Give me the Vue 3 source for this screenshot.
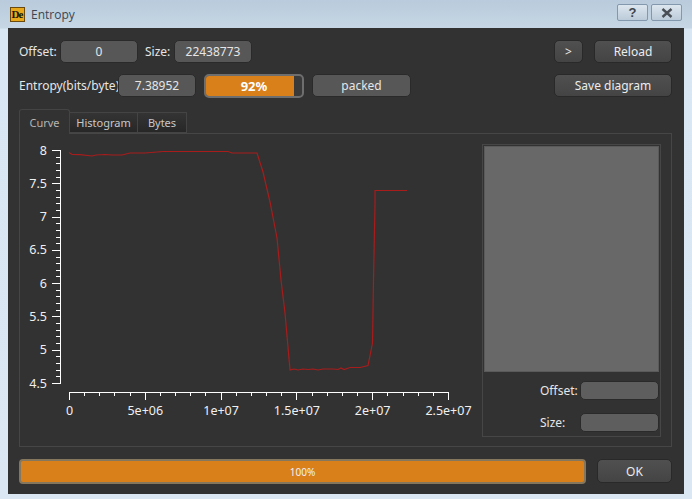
<template>
  <div class="window">
    <!-- title bar -->
    <div class="titlebar">
      <span class="app-icon"><b>D</b><i>e</i></span>
      <span class="title">Entropy</span>
      <div class="caption-btns">
        <button class="caption-btn help">?</button>
        <button class="caption-btn close">
          <svg width="12" height="10" viewBox="0 0 12 10">
            <path d="M1.5 1 L10.5 9 M10.5 1 L1.5 9" stroke="#4a4f55" stroke-width="2.4" fill="none" />
          </svg>
        </button>
      </div>
    </div>

    <div class="client">
      <div class="top">
        <div class="top-left">
          <div class="row">
            <label class="lbl-offset">Offset:</label>
            <div class="field w78">0</div>
            <label class="lbl-size">Size:</label>
            <div class="field w78">22438773</div>
          </div>
          <div class="row">
            <label class="lbl-entropy">Entropy(bits/byte):</label>
            <div class="field w78">7.38952</div>
            <div class="meter">
              <div class="meter-fill" :style="{ width: '92%' }"></div>
              <span class="meter-text">92%</span>
            </div>
            <div class="field w98">packed</div>
          </div>
        </div>
        <div class="top-right">
          <div class="row">
            <button class="btn w28">&gt;</button>
            <button class="btn w78">Reload</button>
          </div>
          <div class="row">
            <button class="btn w118">Save diagram</button>
          </div>
        </div>
      </div>

      <div class="tabs">
        <div
          v-for="(tab, i) in tabs"
          :key="tab.name"
          class="tab"
          :class="{ active: i === 0 }"
          :style="{ width: tab.width + 'px' }"
        >
          {{ tab.name }}
        </div>
      </div>

      <div class="pane">
        <!-- viewBox is in window coordinates, it's a plot canvas -->
        <svg class="plot" width="456" height="296" viewBox="20 140 456 296">
          <g stroke="#ffffff" stroke-width="1" shape-rendering="crispEdges">
            <line x1="60.5" y1="150" x2="60.5" y2="384" />
            <line
              v-for="t in yTicks"
              :key="'y' + t.y"
              :x1="t.major ? 52 : 56"
              x2="60"
              :y1="t.y"
              :y2="t.y"
            />
            <line x1="69" y1="392.5" x2="449" y2="392.5" />
            <line
              v-for="t in xTicks"
              :key="'x' + t.x"
              :x1="t.x"
              :x2="t.x"
              y1="393"
              :y2="t.major ? 400 : 396"
            />
          </g>
          <g class="axis-text">
            <text v-for="l in yLabels" :key="l.text" x="47" :y="l.y + 4.5" text-anchor="end">{{ l.text }}</text>
            <text v-for="l in xLabels" :key="l.text" :x="l.x" y="415" text-anchor="middle">{{ l.text }}</text>
          </g>
          <polyline :points="curve" fill="none" stroke="#a81c1c" stroke-width="1.2" />
        </svg>

        <div class="side">
          <div class="preview"></div>
          <div class="side-row">
            <label>Offset:</label>
            <div class="field side-field"></div>
          </div>
          <div class="side-row">
            <label class="lbl-side-size">Size:</label>
            <div class="field side-field"></div>
          </div>
        </div>
      </div>

      <div class="bottom">
        <div class="progress">100%</div>
        <button class="btn ok">OK</button>
      </div>
    </div>
  </div>
</template>

<script setup>
const tabs = [
  { name: 'Curve', width: 51 },
  { name: 'Histogram', width: 68 },
  { name: 'Bytes', width: 49 }
]

// y axis: 8 at y=150, 4.5 at y=383
const yPos = v => 150 + (8 - v) * (233 / 3.5)
const yTicks = []
for (let i = 0; i <= 35; i++) {
  yTicks.push({ y: Math.round(yPos(8 - i / 10)) + 0.5, major: i % 5 === 0 })
}
const yLabels = ['8', '7.5', '7', '6.5', '6', '5.5', '5', '4.5'].map(text => ({
  text,
  y: yPos(Number(text))
}))

// x axis: 0 at x=69.5, 2.5e7 at x=448.5
const xPos = v => 69.5 + (v / 2.5e7) * 379
const xTicks = []
for (let i = 0; i <= 25; i++) {
  xTicks.push({ x: Math.round(xPos(i * 1e6) - 0.5) + 0.5, major: i % 5 === 0 })
}
const xLabels = [
  { text: '0', v: 0 },
  { text: '5e+06', v: 5e6 },
  { text: '1e+07', v: 1e7 },
  { text: '1.5e+07', v: 1.5e7 },
  { text: '2e+07', v: 2e7 },
  { text: '2.5e+07', v: 2.5e7 }
].map(l => ({ text: l.text, x: xPos(l.v) }))

const curve = [
  [69, 152.5], [72, 154.5], [80, 154.7], [92, 156], [96, 155], [105, 154.5], [112, 155],
  [122, 155], [130, 153], [145, 153], [163, 151.5], [228, 151.5], [232, 153], [240, 153],
  [257, 153], [263, 172], [270, 202], [277, 238], [281, 280], [285, 313], [290, 370],
  [294, 369], [298, 370], [303, 369], [308, 369.5], [313, 369], [318, 370], [323, 369],
  [333, 369], [338, 369.5], [341, 368], [344, 369.5], [350, 367.5], [360, 367.5], [368, 365.5],
  [372.5, 343], [373.5, 280], [375, 205], [375, 190.5], [407, 190.5]
].map(p => p.join(',')).join(' ')
</script>

<style scoped>
.window {
  width: 692px;
  height: 499px;
  box-sizing: border-box;
  padding: 0 8px 5px;
  display: flex;
  flex-direction: column;
  background: linear-gradient(180deg, #b9cbdc 0, #c6d6e4 28px, #d9e6f3 29px, #dbe8f4 100%);
  font-family: "Noto Sans", "Open Sans", sans-serif;
  font-size: 12px;
  color: #e6e6e6;
  overflow: hidden;
}

.titlebar {
  height: 28px;
  flex: none;
  display: flex;
  align-items: center;
  margin: 0 -1px;
  padding-left: 3px;
}

.app-icon {
  width: 15px;
  height: 15px;
  box-sizing: border-box;
  border: 1px solid #6b4a10;
  background: #e8a81c;
  color: #1a1208;
  display: flex;
  align-items: center;
  justify-content: center;
  font-family: "Liberation Serif", serif;
  font-size: 11px;
  line-height: 1;
  overflow: hidden;
}

.app-icon b { font-weight: 700; }
.app-icon i { font-style: normal; font-weight: 700; margin-left: -1px; }

.title {
  margin-left: 6px;
  color: #3c4650;
  font-size: 12px;
  font-family: "Open Sans", "Noto Sans", sans-serif;
}

.caption-btns {
  margin-left: auto;
  margin-right: 3px;
  margin-top: -3px;
  display: flex;
  gap: 3px;
}

.caption-btn {
  height: 17px;
  width: 31px;
  box-sizing: border-box;
  padding: 0;
  border: 1px solid #8398ad;
  border-radius: 2px;
  background: linear-gradient(180deg, #dce6ef, #bccbd9);
  color: #3f454c;
  font-family: "Liberation Sans", sans-serif;
  font-weight: 700;
  font-size: 13px;
  line-height: 14px;
  display: flex;
  align-items: center;
  justify-content: center;
}

.client {
  flex: 1;
  background: #323232;
  display: flex;
  flex-direction: column;
  padding: 12px 12px 0 11px;
  min-height: 0;
}

.top {
  display: flex;
  justify-content: space-between;
}

.top-left,
.top-right {
  display: flex;
  flex-direction: column;
  gap: 11px;
}

.top-right {
  align-items: flex-end;
}

.row {
  height: 23px;
  display: flex;
  align-items: center;
}

.lbl-offset { width: 41px; }
.lbl-size { width: 29px; margin-left: 7px; }
.lbl-entropy { width: 99px; }

.field {
  height: 23px;
  box-sizing: border-box;
  border: 1px solid #2a2a2a;
  border-radius: 5px;
  background: #575757;
  color: #e6e6e6;
  display: flex;
  align-items: center;
  justify-content: center;
  flex: none;
}

.w78 { width: 78px; }
.w98 { width: 99px; margin-left: 8px; }
.w28 { width: 29px; margin-right: 11px; }
.w118 { width: 118px; }

.btn {
  height: 23px;
  box-sizing: border-box;
  padding: 0;
  border: 1px solid #292929;
  border-radius: 5px;
  background: linear-gradient(180deg, #505050, #444444);
  color: #ececec;
  font-family: inherit;
  font-size: 12px;
}

.meter {
  position: relative;
  width: 100px;
  height: 24px;
  margin-left: 8px;
  box-sizing: border-box;
  border: 2px solid #6e6e6e;
  border-radius: 5px;
  background: #3a3a3a;
  overflow: hidden;
}

.meter-fill {
  height: 100%;
  background: #d9801a;
}

.meter-text {
  position: absolute;
  inset: 0;
  display: flex;
  align-items: center;
  justify-content: center;
  color: #fff;
  font-weight: 700;
  font-size: 13px;
}

.tabs {
  display: flex;
  align-items: flex-end;
  margin-top: 12px;
  height: 24px;
  position: relative;
  z-index: 1;
}

.tab {
  height: 21px;
  box-sizing: border-box;
  border: 1px solid #444444;
  border-left-width: 0;
  background: linear-gradient(180deg, #343434, #272727);
  color: #c8c8c8;
  font-size: 11px;
  display: flex;
  align-items: center;
  justify-content: center;
}

.tab.active {
  height: 25px;
  margin-bottom: -1px;
  border-left-width: 1px;
  border-bottom: 0;
  border-radius: 3px 3px 0 0;
  background: #323232;
  color: #b4b4b4;
}

.pane {
  height: 314px;
  box-sizing: border-box;
  border: 1px solid #464646;
  display: flex;
  padding: 6px 10px 9px 0;
  justify-content: space-between;
}

.plot {
  flex: none;
  display: block;
}

.axis-text {
  fill: #f0f0f0;
  font-family: "Noto Sans", sans-serif;
  font-size: 12.5px;
}

.side {
  width: 179px;
  margin-top: 4px;
  box-sizing: border-box;
  border: 1px solid #464646;
  display: flex;
  flex-direction: column;
  padding: 1px 1px 4px 1px;
}

.preview {
  height: 226px;
  flex: none;
  box-sizing: border-box;
  border: 1px solid #5a5a5a;
  background: #686868;
  margin-bottom: 9px;
}

.side-row {
  display: flex;
  align-items: center;
  justify-content: flex-end;
  height: 19px;
  margin-bottom: 13px;
  position: relative;
}

.side-row label {
  position: absolute;
  left: 56px;
}

.side-field {
  width: 79px;
  height: 19px;
  background: #5e5e5e;
}

.bottom {
  display: flex;
  justify-content: space-between;
  align-items: flex-start;
  margin-top: 12px;
}

.progress {
  width: 567px;
  height: 25px;
  box-sizing: border-box;
  border: 2px solid #85765e;
  border-radius: 4px;
  background: #d9801a;
  color: #f2f2f2;
  font-size: 10px;
  display: flex;
  align-items: center;
  justify-content: center;
}

.ok {
  width: 75px;
  height: 24px;
}
</style>

<style>
html, body { margin: 0; background: #dbe8f4; }
</style>
